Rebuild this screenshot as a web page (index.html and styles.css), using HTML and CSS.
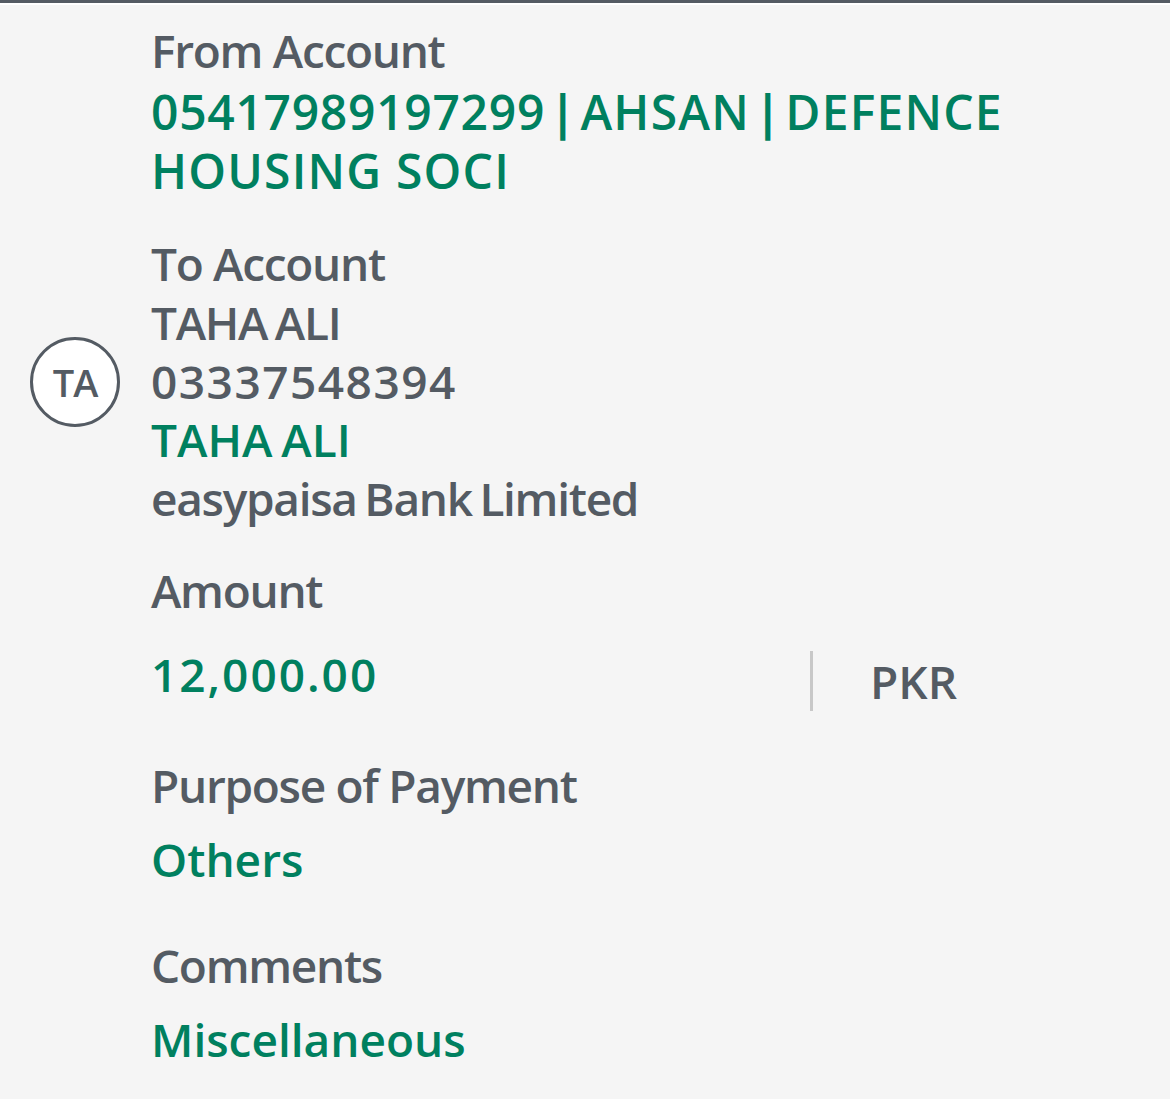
FILE: index.html
```html
<!DOCTYPE html>
<html lang="en">
<head>
<meta charset="utf-8">
<title>Transfer Details</title>
<link rel="stylesheet" href="styles.css">
</head>
<body>
<div class="topbar"></div>
<main class="details">
  <section class="row row-from">
    <div class="lead"></div>
    <div class="body">
      <div class="label">From Account</div>
      <div class="value green from-value"><span class="num">05417989197299</span><span class="pipe"> | </span>AHSAN<span class="pipe"> | </span>DEFENCE HOUSING SOCI</div>
    </div>
  </section>

  <section class="row row-to">
    <div class="lead">
      <div class="avatar">TA</div>
    </div>
    <div class="body">
      <div class="label">To Account</div>
      <div class="value">TAHA ALI</div>
      <div class="value num">03337548394</div>
      <div class="value green">TAHA ALI</div>
      <div class="value">easypaisa Bank Limited</div>
    </div>
  </section>

  <section class="row row-amount">
    <div class="lead"></div>
    <div class="body">
      <div class="label">Amount</div>
      <div class="amount-field">
        <div class="amount green num">12,000.00</div>
        <div class="sep"></div>
        <div class="currency">PKR</div>
      </div>
    </div>
  </section>

  <section class="row row-purpose">
    <div class="lead"></div>
    <div class="body">
      <div class="label">Purpose of Payment</div>
      <div class="value green spaced">Others</div>
    </div>
  </section>

  <section class="row row-comments">
    <div class="lead"></div>
    <div class="body">
      <div class="label">Comments</div>
      <div class="value green spaced">Miscellaneous</div>
    </div>
  </section>
</main>
</body>
</html>
```

FILE: styles.css
```css
html, body {
  margin: 0;
  padding: 0;
}

body {
  background: #f5f5f5;
  font-family: "Open Sans", "Noto Sans", sans-serif;
  font-size: 46px;
  font-weight: 600;
  color: #545b63;
  width: 1170px;
  height: 1099px;
  overflow: hidden;
}

.topbar {
  height: 3px;
  background: #545b63;
  border-bottom: 2px solid #ffffff;
}

.details {
  display: flex;
  flex-direction: column;
  padding-top: 15px;
}

.row {
  display: grid;
  grid-template-columns: 151px 1fr;
  align-items: center;
}

.lead {
  display: flex;
  justify-content: center;
  align-items: center;
}

.body {
  display: flex;
  flex-direction: column;
  padding-right: 100px;
}

.label {
  line-height: 60px;
  letter-spacing: -1.3px;
}

.value {
  line-height: 59px;
  letter-spacing: -1.3px;
  word-spacing: -3px;
}

.num {
  letter-spacing: 1.5px;
}

.green {
  color: #00805f;
  letter-spacing: 0;
}

.from-value {
  font-size: 48px;
  line-height: 59px;
  letter-spacing: 1.2px;
  word-spacing: 0;
}

.from-value .num {
  letter-spacing: 0.7px;
}

.from-value .pipe {
  font-weight: 700;
  letter-spacing: 0;
  word-spacing: -8px;
}

.row-from .label {
  margin-bottom: 2px;
}

.row-to {
  margin-top: 33px;
}

.row-to .value {
  line-height: 58.5px;
}

.avatar {
  width: 84px;
  height: 84px;
  border: 3px solid #545b63;
  border-radius: 50%;
  background: #ffffff;
  display: flex;
  align-items: center;
  justify-content: center;
  font-size: 38px;
  letter-spacing: -1px;
  margin-top: 4px;
  margin-left: -1px;
}

.row-amount {
  margin-top: 33px;
}

.amount-field {
  display: flex;
  align-items: center;
  margin-top: 29px;
  height: 64px;
}

.amount {
  width: 659px;
  line-height: 60px;
  margin-top: -14px;
  letter-spacing: 2px;
}

.sep {
  width: 3px;
  height: 60px;
  background: #c8c8c8;
}

.currency {
  margin-left: 57px;
  line-height: 60px;
  letter-spacing: 0;
}

.row-purpose {
  margin-top: 42px;
}

.row-comments {
  margin-top: 46px;
}

.spaced {
  margin-top: 15px;
}
```
